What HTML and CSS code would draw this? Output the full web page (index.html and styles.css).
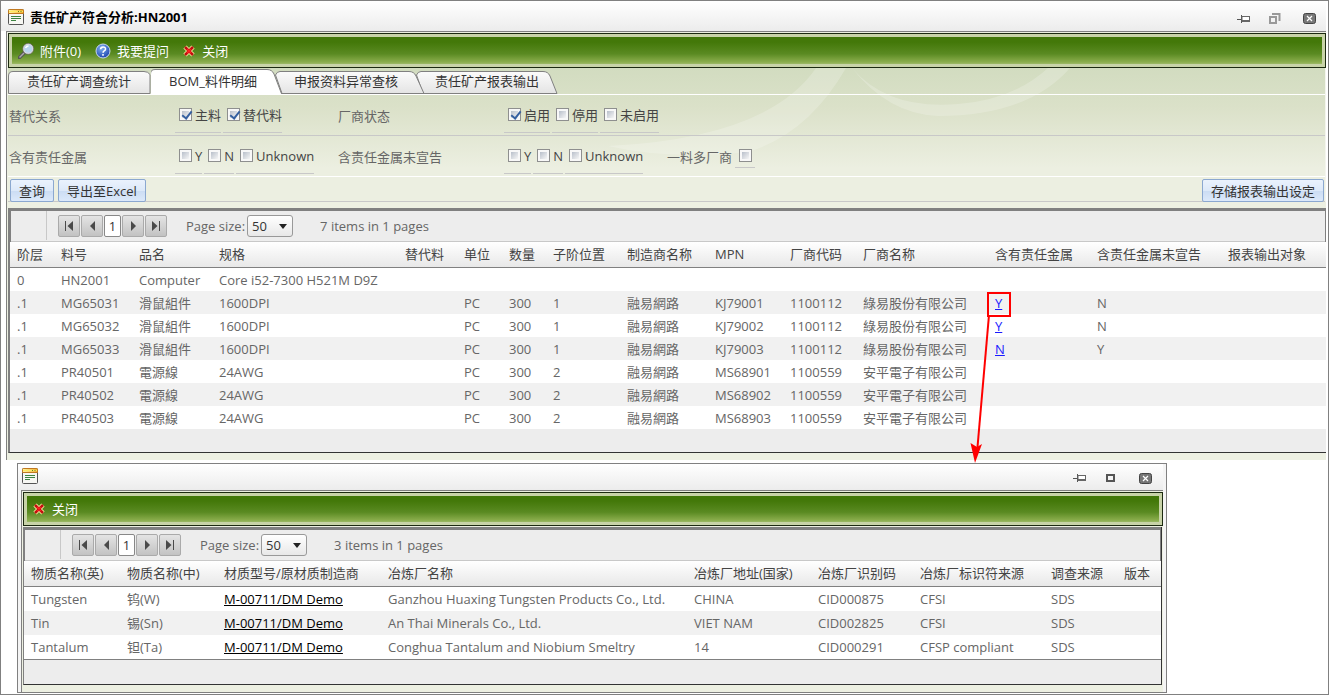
FILE: index.html
```
<!DOCTYPE html>
<html lang="zh-CN">
<head>
<meta charset="utf-8">
<title>责任矿产符合分析:HN2001</title>
<link rel="stylesheet" href="styles.css">
</head>
<body>
<svg class="defs" width="0" height="0" aria-hidden="true">
  <defs>
    <linearGradient id="tabfill" x1="0" y1="0" x2="0" y2="1"><stop offset="0" stop-color="#fbfbfb"/><stop offset="1" stop-color="#e4e4e4"/></linearGradient>
    <linearGradient id="hd" x1="0" x2="1" y1="0" y2="0"><stop offset="0" stop-color="#fff6a0"/><stop offset="1" stop-color="#f0b030"/></linearGradient>
    <radialGradient id="blue" cx=".4" cy=".3" r=".8"><stop offset="0" stop-color="#7fb0f0"/><stop offset="1" stop-color="#1238a8"/></radialGradient>
    <symbol id="doc" viewBox="0 0 16 16">
      <rect x=".5" y=".5" width="15" height="15" rx="1" fill="#fff" stroke="#555"/>
      <path d="M.5 4.500V1.500Q.5.500 1.500.500H14.500Q15.500.500 15.500 1.500V4.500Z" fill="url(#hd)" stroke="#c07820"/>
      <path d="M1 2.500h14" stroke="#ffe860"/>
      <path d="M10 2.500h1M12.500 2.500h1" stroke="#6a7a20"/>
      <rect x="1" y="5" width="14" height="10" fill="#f7f7f3"/>
      <path d="M3 7.500h10M3 9.500h10M3 11.500h5" stroke="#3c8340"/>
    </symbol>
    <symbol id="x" viewBox="0 0 12 12">
      <path d="M2 2l8 8M10 2l-8 8" stroke="#f4ee9c" stroke-width="4.500"/>
      <path d="M2 2l8 8M10 2l-8 8" stroke="#c01010" stroke-width="2.600"/>
      <path d="M4 4l4 4M8 4l-4 4" stroke="#ff2020" stroke-width="1.500"/>
    </symbol>
    <symbol id="pin" viewBox="0 0 14 10">
      <path d="M0 5.500h5" stroke="#555"/>
      <path d="M4.500 1v8" stroke="#555"/>
      <rect x="5" y="2.500" width="7.500" height="5" fill="#fff" stroke="#666"/>
      <path d="M5 7h8" stroke="#666" stroke-width="2"/>
    </symbol>
    <symbol id="shut" viewBox="0 0 13 11">
      <rect x=".5" y=".5" width="12" height="10" rx="2" fill="#777" stroke="#444"/>
      <path d="M4 3l5 5M9 3l-5 5" stroke="#fff" stroke-width="1.200"/>
    </symbol>
    <symbol id="prev" viewBox="0 0 12 10"><path d="M9 0v10L4 5z" fill="#4a4a4a"/></symbol>
    <symbol id="first" viewBox="0 0 12 10"><path d="M2 0h1v10h-1zM10 0v10L4.500 5z" fill="#4a4a4a"/></symbol>
    <symbol id="next" viewBox="0 0 12 10"><path d="M4 0v10L9 5z" fill="#4a4a4a"/></symbol>
    <symbol id="last" viewBox="0 0 12 10"><path d="M10 0h-1v10h1zM2 0v10L7.500 5z" fill="#4a4a4a"/></symbol>
  </defs>
</svg>
<main class="page">
  <section class="window main-window">
    <header class="titlebar">
      <svg class="doc"><use href="#doc"/></svg>
      <h1>责任矿产符合分析:HN2001</h1>
      <div class="controls">
        <button aria-label="固定"><svg width="14" height="10"><use href="#pin"/></svg></button>
        <button aria-label="还原"><svg width="12" height="12" viewBox="0 0 12 12" fill="none" stroke="#999" stroke-width="2"><path d="M1 4h6v6H1zM3 1h7.500v7"/></svg></button>
        <button aria-label="关闭窗口"><svg width="13" height="11"><use href="#shut"/></svg></button>
      </div>
    </header>
    <div class="frame">
      <nav class="toolbar">
        <button><svg width="16" height="16" viewBox="0 0 16 16"><path d="M1.500 14.500L7 9" stroke="#555" stroke-width="3.500" stroke-linecap="round"/><path d="M1.500 14.500L6 10" stroke="#aaa" stroke-width="1.500"/><circle cx="10.200" cy="5.800" r="4.800" fill="#b8d4ee" stroke="#ddd" stroke-width="1.500"/><circle cx="10.200" cy="5.800" r="5.500" fill="none" stroke="#555" stroke-width=".6"/><path d="M7.500 5q1-2 3-2" stroke="#fff" stroke-width="1.500" fill="none"/></svg>附件(0)</button>
        <button><svg width="16" height="16" viewBox="0 0 16 16"><circle cx="8" cy="8" r="7" fill="url(#blue)" stroke="#c9d8f0"/><path d="M5.600 6.300q.1-2.300 2.500-2.300t2.400 2q0 1.200-1.300 1.900-1.100.6-1.100 1.800M8 11v1.700" fill="none" stroke="#fff" stroke-width="1.600"/></svg>我要提问</button>
        <button><svg class="xi"><use href="#x"/></svg>关闭</button>
      </nav>
      <div class="form-area">
        <svg class="swoosh" viewBox="0 0 1317 140" preserveAspectRatio="none" aria-hidden="true"><path d="M600 78Q760 70 808 0H838Q800 66 740 84Q660 92 600 78M844 0Q880 42 950 36Q1005 32 1040 0H1062Q1020 48 930 48Q880 46 844 0" fill="#fff" opacity=".2"/></svg>
        <div class="tabs" role="tablist">
          <button role="tab"><svg width="150" height="25"><path d="M.5 24.500V7Q.5 2.500 5 2.500H136Q140 2.500 142 5.500V24.500Z"/></svg><span>责任矿产调查统计</span></button>
          <button role="tab" aria-selected="true" class="on"><svg width="140" height="25"><path d="M-.5 26V5Q-.5 .500 4 .500H116Q121 .500 123 5L131 26Z"/></svg><span>BOM_料件明细</span></button>
          <button role="tab"><svg width="152" height="25"><path d="M.5 6Q2 2.500 5 2.500H134Q139 2.500 141 7L149 24.500H7Z"/></svg><span>申报资料异常查核</span></button>
          <button role="tab"><svg width="152" height="25"><path d="M.5 6Q2 2.500 5 2.500H127Q132 2.500 134 7L141 24.500H7Z"/></svg><span>责任矿产报表输出</span></button>
        </div>
        <div class="filters">
          <span class="label">替代关系</span>
          <div class="opts"><label><input type="checkbox" checked>主料</label><label><input type="checkbox" checked>替代料</label></div>
          <span class="label">厂商状态</span>
          <div class="opts"><label><input type="checkbox" checked>启用</label><label><input type="checkbox">停用</label><label><input type="checkbox">未启用</label></div>
        </div>
        <div class="filters second">
          <span class="label">含有责任金属</span>
          <div class="opts"><label><input type="checkbox">Y</label><label><input type="checkbox">N</label><label><input type="checkbox">Unknown</label></div>
          <span class="label">含责任金属未宣告</span>
          <div class="opts"><label><input type="checkbox">Y</label><label><input type="checkbox">N</label><label><input type="checkbox">Unknown</label></div>
          <label class="label" for="multi">一料多厂商</label>
          <div class="opts"><span class="solo"><input type="checkbox" id="multi"></span></div>
        </div>
        <div class="actions"><button>查询</button><button>导出至Excel</button><button class="right">存储报表输出设定</button></div>
      </div>
      <div class="grid">
        <div class="pager">
          <div class="nav"><button aria-label="首页"><svg><use href="#first"/></svg></button><button aria-label="上一页"><svg><use href="#prev"/></svg></button><button class="cur">1</button><button aria-label="下一页"><svg><use href="#next"/></svg></button><button aria-label="末页"><svg><use href="#last"/></svg></button></div>
          <label for="ps1">Page size:</label><span class="sel"><select id="ps1"><option>50</option></select></span>
          <span class="count">7 items in 1 pages</span>
        </div>
        <table class="bom">
          <colgroup><col class="w44"><col class="w78"><col class="w80"><col class="w186"><col class="w59"><col class="w45"><col class="w44"><col class="w74"><col class="w88"><col class="w75"><col class="w73"><col class="w132"><col class="w102"><col class="w131"><col></colgroup>
          <thead><tr><th>阶层</th><th>料号</th><th>品名</th><th>规格</th><th>替代料</th><th>单位</th><th>数量</th><th>子阶位置</th><th>制造商名称</th><th>MPN</th><th>厂商代码</th><th>厂商名称</th><th>含有责任金属</th><th>含责任金属未宣告</th><th>报表输出对象</th></tr></thead>
          <tbody>
            <tr><td>0</td><td>HN2001</td><td>Computer</td><td>Core i52-7300 H521M D9Z</td><td></td><td></td><td></td><td></td><td></td><td></td><td></td><td></td><td></td><td></td><td></td></tr>
            <tr><td>.1</td><td>MG65031</td><td>滑鼠組件</td><td>1600DPI</td><td></td><td>PC</td><td>300</td><td>1</td><td>融易網路</td><td>KJ79001</td><td>1100112</td><td>綠易股份有限公司</td><td><a href="#detail" class="marked">Y<svg class="arrow" width="40" height="175" viewBox="0 0 40 175" aria-hidden="true"><rect x="14" y="2" width="22" height="23" fill="none" stroke="#f00" stroke-width="2"/><path d="M15 24L3.500 156" stroke="#f00" stroke-width="2"/><path d="M1 172L-3.500 152L3 156L8 153Z" fill="#f00"/></svg></a></td><td>N</td><td></td></tr>
            <tr><td>.1</td><td>MG65032</td><td>滑鼠組件</td><td>1600DPI</td><td></td><td>PC</td><td>300</td><td>1</td><td>融易網路</td><td>KJ79002</td><td>1100112</td><td>綠易股份有限公司</td><td><a href="#detail">Y</a></td><td>N</td><td></td></tr>
            <tr><td>.1</td><td>MG65033</td><td>滑鼠組件</td><td>1600DPI</td><td></td><td>PC</td><td>300</td><td>1</td><td>融易網路</td><td>KJ79003</td><td>1100112</td><td>綠易股份有限公司</td><td><a href="#detail">N</a></td><td>Y</td><td></td></tr>
            <tr><td>.1</td><td>PR40501</td><td>電源線</td><td>24AWG</td><td></td><td>PC</td><td>300</td><td>2</td><td>融易網路</td><td>MS68901</td><td>1100559</td><td>安平電子有限公司</td><td></td><td></td><td></td></tr>
            <tr><td>.1</td><td>PR40502</td><td>電源線</td><td>24AWG</td><td></td><td>PC</td><td>300</td><td>2</td><td>融易網路</td><td>MS68902</td><td>1100559</td><td>安平電子有限公司</td><td></td><td></td><td></td></tr>
            <tr><td>.1</td><td>PR40503</td><td>電源線</td><td>24AWG</td><td></td><td>PC</td><td>300</td><td>2</td><td>融易網路</td><td>MS68903</td><td>1100559</td><td>安平電子有限公司</td><td></td><td></td><td></td></tr>
          </tbody>
        </table>
        <div class="foot"></div>
      </div>
    </div>
  </section>
  <section class="window detail" id="detail">
    <header class="titlebar">
      <svg class="doc"><use href="#doc"/></svg>
      <div class="controls">
        <button aria-label="固定"><svg width="14" height="10"><use href="#pin"/></svg></button>
        <button aria-label="最大化"><svg width="10" height="8" viewBox="0 0 10 8"><rect x="1" y="1" width="7" height="6" fill="none" stroke="#555" stroke-width="2"/></svg></button>
        <button aria-label="关闭窗口"><svg width="13" height="11"><use href="#shut"/></svg></button>
      </div>
    </header>
    <div class="frame">
      <nav class="toolbar"><button><svg class="xi"><use href="#x"/></svg>关闭</button></nav>
      <div class="grid">
        <div class="pager">
          <div class="nav"><button aria-label="首页"><svg><use href="#first"/></svg></button><button aria-label="上一页"><svg><use href="#prev"/></svg></button><button class="cur">1</button><button aria-label="下一页"><svg><use href="#next"/></svg></button><button aria-label="末页"><svg><use href="#last"/></svg></button></div>
          <label for="ps2">Page size:</label><span class="sel"><select id="ps2"><option>50</option></select></span>
          <span class="count">3 items in 1 pages</span>
        </div>
        <table class="smelters">
          <colgroup><col class="w96"><col class="w97"><col class="w164"><col class="w306"><col class="w124"><col class="w102"><col class="w131"><col class="w73"><col></colgroup>
          <thead><tr><th>物质名称(英)</th><th>物质名称(中)</th><th>材质型号/原材质制造商</th><th>冶炼厂名称</th><th>冶炼厂地址(国家)</th><th>冶炼厂识别码</th><th>冶炼厂标识符来源</th><th>调查来源</th><th>版本</th></tr></thead>
          <tbody>
            <tr><td>Tungsten</td><td>钨(W)</td><td><a href="#m">M-00711/DM Demo</a></td><td>Ganzhou Huaxing Tungsten Products Co., Ltd.</td><td>CHINA</td><td>CID000875</td><td>CFSI</td><td>SDS</td><td></td></tr>
            <tr><td>Tin</td><td>锡(Sn)</td><td><a href="#m">M-00711/DM Demo</a></td><td>An Thai Minerals Co., Ltd.</td><td>VIET NAM</td><td>CID002825</td><td>CFSI</td><td>SDS</td><td></td></tr>
            <tr><td>Tantalum</td><td>钽(Ta)</td><td><a href="#m">M-00711/DM Demo</a></td><td>Conghua Tantalum and Niobium Smeltry</td><td>14</td><td>CID000291</td><td>CFSP compliant</td><td>SDS</td><td></td></tr>
          </tbody>
        </table>
        <div class="foot"></div>
      </div>
    </div>
  </section>
</main>
</body>
</html>
```
FILE: styles.css
```
* { box-sizing: border-box; }
body { margin: 0; background: #fff; color: #666; font: 13px/18px "Open Sans", "Noto Sans CJK SC", sans-serif; }
button, select, input { font: inherit; color: inherit; margin: 0; padding: 0; }
button { border: 0; background: none; }
svg { display: block; flex: none; }
.defs { position: absolute; }
.page { border: 1px solid #808080; min-height: 100vh; padding-bottom: 1px; }

.titlebar { display: flex; align-items: center; height: 30px; padding: 2px 8px 0 7px; background: linear-gradient(#fff, #ececec); }
.doc { width: 16px; height: 16px; }
.titlebar h1 { margin: 0 0 0 6px; font-size: 13px; line-height: 18px; color: #000; }
.controls { display: flex; align-items: center; margin-left: auto; padding-top: 3px; }
.controls button { display: grid; place-items: center; width: 18px; height: 14px; }
.controls button:nth-child(2) { margin-left: 13px; }
.controls button:last-child { margin-left: 16px; }

.frame { border-top: 1px solid #808080; border-left: 1px solid #808080; background: #edf0e2; padding: 1px 0 7px 1px; }
.main-window { padding-right: 2px; }
.main-window > .frame { margin-left: 5px; }

.toolbar { display: flex; align-items: center; gap: 12px; height: 35px; padding: 0 0 0 8px; border: 1px solid #1c2a10; color: #fff;
  background: linear-gradient(#437809, #437809 25%, #5a8a22 60%, #8aad4c 85%, #b8cc90) padding-box; box-shadow: inset 0 0 0 3px #c8d3a8; }
.toolbar button { display: flex; align-items: center; gap: 6px; padding: 0 1px; }
.xi { width: 12px; height: 12px; margin-right: 1px; }

.form-area { position: relative; background: linear-gradient(#d2dcc0, #dbe1c9 30%, #ecefe1 75%); border-right: 1px solid #f4f5ee; }
.swoosh { position: absolute; width: 100%; height: 140px; top: 0; left: 0; }
.tabs { position: relative; display: flex; height: 27px; border-bottom: 1px solid #fff; }
.tabs button { position: relative; height: 26px; padding: 0 0 1px 19px; text-align: left; color: #333; width: 141px; }
.tabs button:first-child { width: 143px; }
.tabs button:nth-child(3) { z-index: 1; }
.tabs .on { width: 124px; z-index: 2; padding-left: 18px; }
.tabs svg { position: absolute; left: 0; top: 1px; overflow: visible; fill: url(#tabfill); stroke: #808080; }
.tabs .on svg { fill: #fff; overflow: hidden; }
.tabs span { position: relative; white-space: nowrap; }

.filters { position: relative; display: grid; grid-template-columns: 166px 163px 166px 163px 68px 1fr; height: 41px; padding-left: 1px; border-bottom: 1px solid #c8c8c8; }
.filters.second { border-color: #fff; }
.label { padding-top: 12px; }
.opts { display: flex; gap: 2px; height: 38px; }
.opts label, .solo { display: flex; align-items: center; gap: 3px; padding: 2px 0 0 4px; border-bottom: 1px solid #c8c8c8; color: #444; white-space: nowrap; }
.solo { height: 32px; padding: 8px 3px 0 4px; }
input[type=checkbox] { appearance: none; position: relative; width: 13px; height: 13px; border: 1px solid #8e8f8f; background: linear-gradient(135deg, #b8bfca, #f6f6f6) content-box, #f8f8f8; padding: 2px; }
input:checked::before { content: ""; position: absolute; left: 4px; top: 0; width: 4px; height: 8px; border: solid #3560a0; border-width: 0 2px 2px 0; transform: rotate(38deg); }

.actions { position: relative; display: flex; gap: 4px; padding: 2px 1px 0 2px; margin-bottom: 5px; }
.actions::after { content: ""; position: absolute; left: 0; right: 0; bottom: 0; border-bottom: 1px solid #c8c8c8; }
.actions button { z-index: 1; height: 23px; padding: 0 8px; border: 1px solid #8ba8d0; border-radius: 2px; color: #333; background: linear-gradient(#eaf2fd, #dde9f9 50%, #cbdcf3 51%, #dce9fa); }
.actions .right { margin-left: auto; }

.grid { border: solid #333; border-width: 0 0 1px; border-left: 1px solid #808080; background: #ededed; }
.form-area + .grid { margin-top: 6px; border-left-width: 2px; }
.pager { display: flex; align-items: center; height: 34px; padding-bottom: 2px; border: solid #808080; border-width: 3px 1px 0 1px; box-shadow: inset 0 -1px #c8c8c8; }
.nav { display: flex; gap: 1px; align-items: center; align-self: stretch; margin-left: 35px; padding-left: 11px; border-left: 1px solid #c8c8c8; }
.nav button { display: grid; place-items: center; width: 22px; height: 22px; border: 1px solid #aaa; border-radius: 2px; background: linear-gradient(#e4e4e4, #c2c2c2); }
.nav svg { width: 12px; height: 10px; }
.nav .cur { width: 17px; background: #fff; border-color: #888; color: #333; }
.pager label { margin: 0 2px 0 19px; }
.sel { position: relative; }
.sel::after { content: ""; position: absolute; right: 6px; top: 9px; border: 4px solid transparent; border-top: 5px solid #222; border-bottom: 0; pointer-events: none; }
.sel select { display: block; appearance: none; width: 46px; height: 22px; border: 1px solid #999; border-radius: 3px; padding-left: 4px; color: #333; background: linear-gradient(#fff, #e8e8e8); }
.count { margin-left: 27px; }

table { width: 100%; table-layout: fixed; border-collapse: separate; border-spacing: 0; background: #fff; }
th, td { height: 23px; padding: 0 0 0 7px; text-align: left; font-weight: 400; white-space: nowrap; line-height: 18px; }
th { height: 26px; padding-bottom: 1px; color: #444; border-bottom: 1px solid #808080; background: linear-gradient(#fff, #e8e8e8); }
tbody tr:nth-child(even) { background: #f1f1f1; }
.bom a { color: #1a1aff; }
.marked { position: relative; }
.arrow { position: absolute; left: -21px; top: -3px; overflow: visible; }
.smelters td { height: 24px; }
.smelters a { color: #000; }
.foot { height: 23px; }
.w44 { width: 44px; } .w45 { width: 45px; } .w59 { width: 59px; } .w73 { width: 73px; } .w74 { width: 74px; } .w75 { width: 75px; }
.w78 { width: 78px; } .w80 { width: 80px; } .w88 { width: 88px; } .w96 { width: 96px; } .w97 { width: 97px; } .w102 { width: 102px; }
.w124 { width: 124px; } .w131 { width: 131px; } .w132 { width: 132px; } .w164 { width: 164px; } .w186 { width: 186px; } .w306 { width: 306px; }

.detail { margin: 3px 161px 0 16px; border: 1px solid #808080; background: #f4f4f4; padding-right: 3px; }
.detail .titlebar { height: 26px; padding: 0 9px 2px 4px; }
.detail .controls { padding-top: 4px; }
.detail .frame { margin-left: 3px; }
.detail .toolbar { height: 34px; }
.detail .grid { border-right: 1px solid #333; margin: 1px 1px 0 0; }
.detail .foot { height: 25px; border-top: 1px solid #808080; }
```
